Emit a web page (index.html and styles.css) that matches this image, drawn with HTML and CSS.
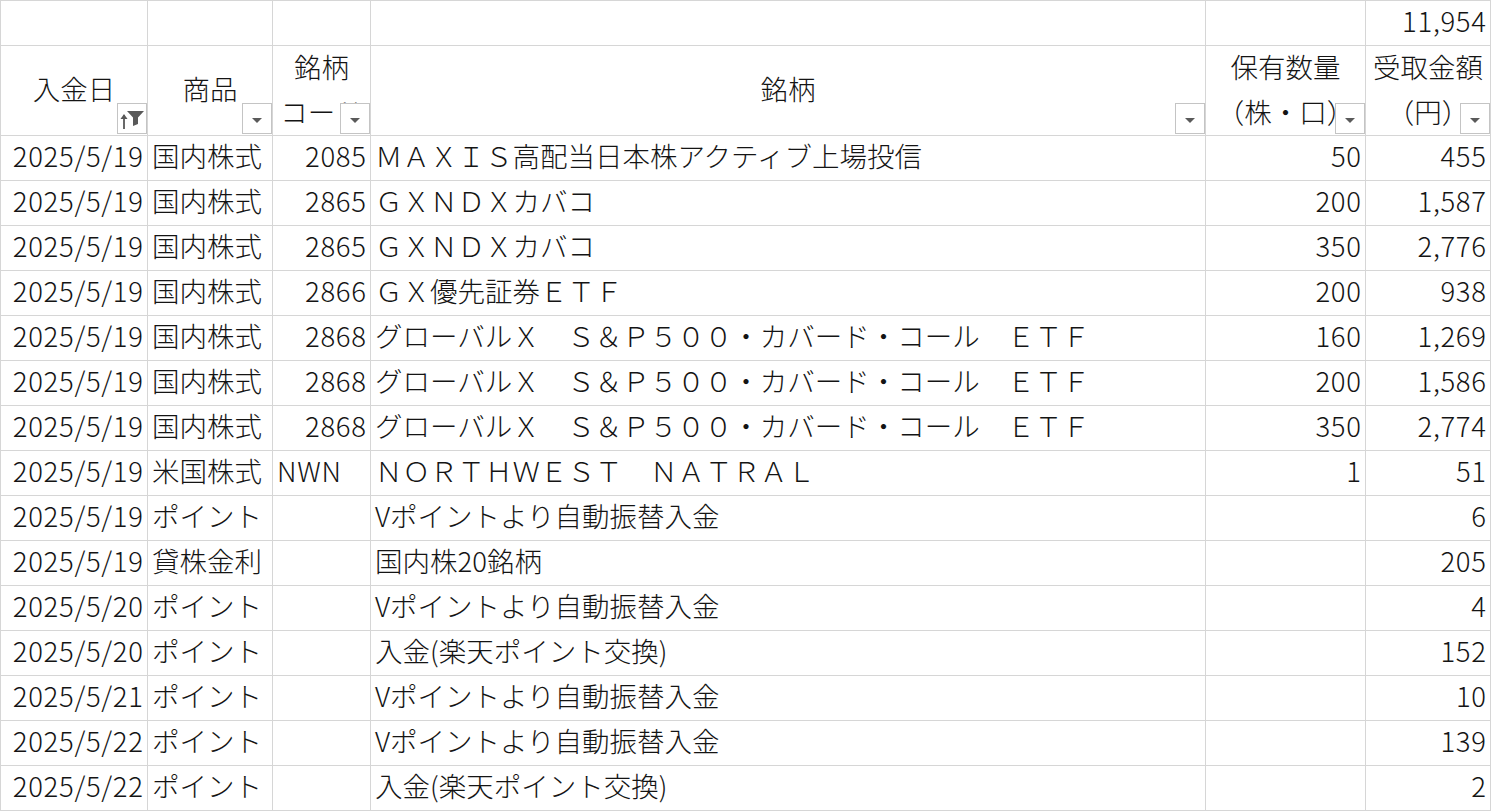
FILE: index.html
```html
<!DOCTYPE html>
<html lang="ja">
<head>
<meta charset="utf-8">
<title>入金履歴</title>
<link rel="stylesheet" href="styles.css">
</head>
<body>
<div class="sheet">
  <div class="c"></div><div class="c"></div><div class="c"></div><div class="c"></div><div class="c"></div><div class="c r n">11,954</div>

  <div class="c hd"><span>入金日</span>
    <span class="btn"><svg width="30" height="31" viewBox="0 0 30 31"><path d="M7 26V12" stroke="#595959" stroke-width="1.8" fill="none"/><path d="M3.5 16L7 11L10.5 16Z" fill="#595959"/><path d="M10 8H27L21 14.5V21L16 23V14.5Z" fill="#595959"/></svg></span>
  </div>
  <div class="c hd"><span>商品</span><span class="btn"><i class="arw"></i></span></div>
  <div class="c hd two"><span class="ln">銘柄</span><span class="ln">コード</span><span class="btn"><i class="arw"></i></span></div>
  <div class="c hd"><span>銘柄</span><span class="btn"><i class="arw"></i></span></div>
  <div class="c hd two"><span class="ln">保有数量</span><span class="ln">（株・口）</span><span class="btn"><i class="arw"></i></span></div>
  <div class="c hd two"><span class="ln">受取金額</span><span class="ln">（円）</span><span class="btn"><i class="arw"></i></span></div>

  <div class="c r n">2025/5/19</div><div class="c l">国内株式</div><div class="c r n">2085</div><div class="c l">ＭＡＸＩＳ高配当日本株アクティブ上場投信</div><div class="c r n">50</div><div class="c r n">455</div>
  <div class="c r n">2025/5/19</div><div class="c l">国内株式</div><div class="c r n">2865</div><div class="c l">ＧＸＮＤＸカバコ</div><div class="c r n">200</div><div class="c r n">1,587</div>
  <div class="c r n">2025/5/19</div><div class="c l">国内株式</div><div class="c r n">2865</div><div class="c l">ＧＸＮＤＸカバコ</div><div class="c r n">350</div><div class="c r n">2,776</div>
  <div class="c r n">2025/5/19</div><div class="c l">国内株式</div><div class="c r n">2866</div><div class="c l">ＧＸ優先証券ＥＴＦ</div><div class="c r n">200</div><div class="c r n">938</div>
  <div class="c r n">2025/5/19</div><div class="c l">国内株式</div><div class="c r n">2868</div><div class="c l">グローバルＸ　Ｓ＆Ｐ５００・カバード・コール　ＥＴＦ</div><div class="c r n">160</div><div class="c r n">1,269</div>
  <div class="c r n">2025/5/19</div><div class="c l">国内株式</div><div class="c r n">2868</div><div class="c l">グローバルＸ　Ｓ＆Ｐ５００・カバード・コール　ＥＴＦ</div><div class="c r n">200</div><div class="c r n">1,586</div>
  <div class="c r n">2025/5/19</div><div class="c l">国内株式</div><div class="c r n">2868</div><div class="c l">グローバルＸ　Ｓ＆Ｐ５００・カバード・コール　ＥＴＦ</div><div class="c r n">350</div><div class="c r n">2,774</div>
  <div class="c r n">2025/5/19</div><div class="c l">米国株式</div><div class="c l n">NWN</div><div class="c l">ＮＯＲＴＨＷＥＳＴ　ＮＡＴＲＡＬ</div><div class="c r n">1</div><div class="c r n">51</div>
  <div class="c r n">2025/5/19</div><div class="c l">ポイント</div><div class="c"></div><div class="c l">Vポイントより自動振替入金</div><div class="c"></div><div class="c r n">6</div>
  <div class="c r n">2025/5/19</div><div class="c l">貸株金利</div><div class="c"></div><div class="c l">国内株20銘柄</div><div class="c"></div><div class="c r n">205</div>
  <div class="c r n">2025/5/20</div><div class="c l">ポイント</div><div class="c"></div><div class="c l">Vポイントより自動振替入金</div><div class="c"></div><div class="c r n">4</div>
  <div class="c r n">2025/5/20</div><div class="c l">ポイント</div><div class="c"></div><div class="c l">入金(楽天ポイント交換)</div><div class="c"></div><div class="c r n">152</div>
  <div class="c r n">2025/5/21</div><div class="c l">ポイント</div><div class="c"></div><div class="c l">Vポイントより自動振替入金</div><div class="c"></div><div class="c r n">10</div>
  <div class="c r n">2025/5/22</div><div class="c l">ポイント</div><div class="c"></div><div class="c l">Vポイントより自動振替入金</div><div class="c"></div><div class="c r n">139</div>
  <div class="c r n">2025/5/22</div><div class="c l">ポイント</div><div class="c"></div><div class="c l">入金(楽天ポイント交換)</div><div class="c"></div><div class="c r n">2</div>
</div>
</body>
</html>
```

FILE: styles.css
```css
html, body {
  margin: 0;
  padding: 0;
  background: #ffffff;
}

body {
  font-family: "Noto Sans CJK JP", "Noto Sans", sans-serif;
  font-size: 27.5px;
  font-weight: 300;
  color: #141414;
}

.sheet {
  display: grid;
  width: 1491px;
  grid-template-columns: 146px 124px 97px 834px 159px 124px;
  grid-template-rows: 44px 89px repeat(15, 44px);
  gap: 1px;
  padding: 1px;
  box-sizing: border-box;
  height: 811px;
  background: #d6d6d6;
}

.c {
  background: #ffffff;
  display: flex;
  align-items: center;
  padding: 0 4px 5px;
  white-space: nowrap;
  overflow: hidden;
  line-height: 39px;
  position: relative;
}

.r { justify-content: flex-end; }
.l { justify-content: flex-start; }

.n { letter-spacing: 0.7px; }
.r.n { padding-right: 3.3px; }

.hd {
  justify-content: center;
  padding: 0 0 5px;
}

.hd.two {
  flex-direction: column;
  justify-content: flex-start;
  align-items: center;
  padding: 0;
}

.hd .ln {
  display: block;
  height: 45px;
  line-height: 40px;
}

.btn {
  position: absolute;
  right: 0;
  bottom: 1px;
  width: 30px;
  height: 31px;
  box-sizing: border-box;
  border: 1px solid #c4c4c4;
  background: #ffffff;
  display: flex;
  align-items: center;
  justify-content: center;
}

.btn svg {
  position: absolute;
  left: -1px;
  top: -1px;
}

.arw {
  display: block;
  width: 0;
  height: 0;
  border-left: 5px solid transparent;
  border-right: 5px solid transparent;
  border-top: 5px solid #5a5a5a;
  margin-top: 3px;
}
```
